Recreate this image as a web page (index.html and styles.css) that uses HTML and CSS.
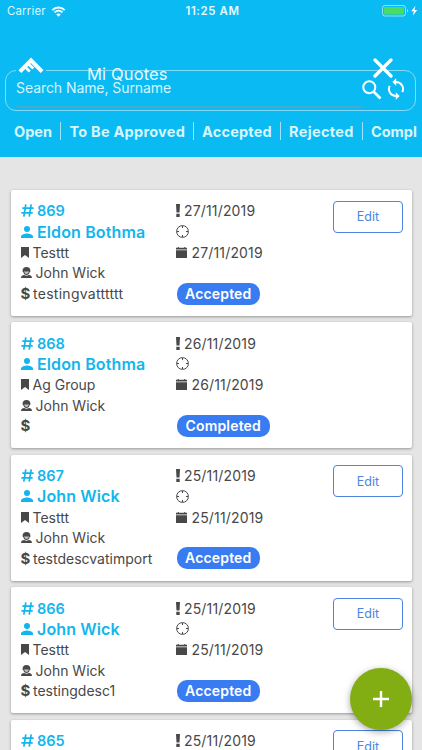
FILE: index.html
```html
<!DOCTYPE html>
<html lang="en">
<head>
<meta charset="utf-8">
<title>Mi Quotes</title>
<link rel="stylesheet" href="styles.css">
</head>
<body>
<svg class="symbols" aria-hidden="true">
  <symbol id="hash" viewBox="0 0 13 13"><path d="M4.8.4 2.8 12.6M10.2.4 8.2 12.6M1.3 4.1h11.3M.4 8.9h11.3" fill="none" stroke="currentColor" stroke-width="1.700"/></symbol>
  <symbol id="person" viewBox="0 0 12 12"><circle cx="6" cy="3.1" r="3"/><path d="M0 12v-1.6C0 8.400 4 7.400 6 7.400s6 1 6 3V12z"/></symbol>
  <symbol id="bookmark" viewBox="0 0 8 11"><path d="M0 0h8v11L4 8.100 0 11z"/></symbol>
  <symbol id="agent" viewBox="0 0 11 11"><path d="M1.500 4.400C1.500 1.500 3 0 5.500 0s4 1.500 4 4.400L8.700 5C8.400 6.900 7.200 8 5.500 8S2.600 6.900 2.300 5z"/><path d="M3.200 4.300c1.400.3 3.200.3 4.600 0C7.600 6 6.800 7 5.500 7S3.400 6 3.200 4.300z" fill="#fff" opacity=".65"/><path d="M0 11c0-2 1.300-2.700 3.300-3 1.300 1 3.100 1 4.400 0 2 .3 3.300 1 3.300 3z"/></symbol>
  <symbol id="alert" viewBox="0 0 4 13"><path d="M0 0h4l-.5 8.500h-3zM.3 9.700h3.400V13H.3z"/></symbol>
  <symbol id="clock" viewBox="0 0 13 13"><circle cx="6.500" cy="6.500" r="5.900" fill="none" stroke="currentColor" stroke-width="1"/><path d="M6.500 1v2M6.500 10v2M1 6.500h2M10 6.500h2" stroke="currentColor"/></symbol>
  <symbol id="calendar" viewBox="0 0 11 11"><path d="M0 .8h1.800V0h1v.8h5.400V0h1v.8H11V2.500H0zM0 3.200h11V11H0z"/></symbol>
</svg>

<header class="header">
  <div class="status">
    <span class="carrier">Carrier</span>
    <svg class="wifi" viewBox="0 0 14 11"><path d="M.8 4.100c3.500-3.500 8.900-3.500 12.400 0M3 6.400c2.300-2.200 5.700-2.200 8 0" fill="none" stroke="currentColor" stroke-width="1.900"/><path d="M4.700 8.300c1.400-1.200 3.200-1.200 4.600 0L7 10.700z"/></svg>
    <span class="time">11:25 AM</span>
    <svg class="battery" viewBox="0 0 36 12"><rect x=".5" y=".5" width="23" height="10.500" rx="2.500" fill="none" stroke="#fff" stroke-opacity=".55"/><rect x="2" y="2" width="20" height="7.500" rx="1.200" fill="#4cd964"/><path d="M25 4c1.500.5 1.500 3 0 3.500z" opacity=".6"/><path d="M33.500.8 29.200 6.300h2.600l-1 4.400 4.400-5.800h-2.700z"/></svg>
  </div>
  <div class="titlebar">
    <span class="logo"><svg viewBox="0 0 26 17"><path d="M1.900 14.700 13 3.300l11.100 11.400" fill="none" stroke="currentColor" stroke-width="4"/><path d="m6.500 9.500 5.300 5M10 6.500l5.300 5" fill="none" stroke="currentColor" stroke-width="2.800"/></svg></span>
    <h1>Mi Quotes</h1>
    <svg class="close" viewBox="0 0 20 20"><path d="m2 2 16 16M18 2 2 18" stroke="currentColor" stroke-width="3.200" stroke-linecap="round"/></svg>
  </div>
  <div class="search">
    <div class="field">Search Name, Surname</div>
    <svg class="find" viewBox="0 0 20 20"><circle cx="7.300" cy="7.300" r="6" fill="none" stroke="currentColor" stroke-width="2"/><path d="m11.500 11.500 7 7" stroke="currentColor" stroke-width="2.600"/></svg>
    <svg class="sync" viewBox="0 0 18 22"><path d="M9 4a7 7 0 0 1 6.300 10.100M9 18A7 7 0 0 1 2.700 7.900" fill="none" stroke="currentColor" stroke-width="2"/><path d="M9.200.3v7.400L5.300 4zM8.800 14.300v7.400l3.900-3.700z"/></svg>
  </div>
  <nav class="tabs">
    <span class="tab open">Open</span><span class="tab approve">To Be Approved</span><span class="tab accept">Accepted</span><span class="tab reject">Rejected</span><span class="tab complete">Completed</span>
  </nav>
</header>

<main class="list">
  <article class="card">
    <div class="left">
      <div class="row number"><svg class="hash"><use href="#hash"/></svg>869</div>
      <div class="row client"><svg class="person"><use href="#person"/></svg>Eldon Bothma</div>
      <div class="row"><svg class="bookmark"><use href="#bookmark"/></svg>Testtt</div>
      <div class="row"><svg class="agent"><use href="#agent"/></svg>John Wick</div>
      <div class="row"><b class="dollar">$</b><span class="vat">testingvatttttt</span></div>
    </div>
    <div class="mid">
      <div class="row"><svg class="alert"><use href="#alert"/></svg>27/11/2019</div>
      <div class="row"><svg class="clock"><use href="#clock"/></svg></div>
      <div class="row"><svg class="calendar"><use href="#calendar"/></svg>27/11/2019</div>
      <span class="badge">Accepted</span>
    </div>
    <button class="edit">Edit</button>
  </article>
  <article class="card">
    <div class="left">
      <div class="row number"><svg class="hash"><use href="#hash"/></svg>868</div>
      <div class="row client"><svg class="person"><use href="#person"/></svg>Eldon Bothma</div>
      <div class="row"><svg class="bookmark"><use href="#bookmark"/></svg>Ag Group</div>
      <div class="row"><svg class="agent"><use href="#agent"/></svg>John Wick</div>
      <div class="row"><b class="dollar">$</b></div>
    </div>
    <div class="mid">
      <div class="row"><svg class="alert"><use href="#alert"/></svg>26/11/2019</div>
      <div class="row"><svg class="clock"><use href="#clock"/></svg></div>
      <div class="row"><svg class="calendar"><use href="#calendar"/></svg>26/11/2019</div>
      <span class="badge wide">Completed</span>
    </div>
  </article>
  <article class="card">
    <div class="left">
      <div class="row number"><svg class="hash"><use href="#hash"/></svg>867</div>
      <div class="row client"><svg class="person"><use href="#person"/></svg>John Wick</div>
      <div class="row"><svg class="bookmark"><use href="#bookmark"/></svg>Testtt</div>
      <div class="row"><svg class="agent"><use href="#agent"/></svg>John Wick</div>
      <div class="row"><b class="dollar">$</b>testdescvatimport</div>
    </div>
    <div class="mid">
      <div class="row"><svg class="alert"><use href="#alert"/></svg>25/11/2019</div>
      <div class="row"><svg class="clock"><use href="#clock"/></svg></div>
      <div class="row"><svg class="calendar"><use href="#calendar"/></svg>25/11/2019</div>
      <span class="badge">Accepted</span>
    </div>
    <button class="edit">Edit</button>
  </article>
  <article class="card">
    <div class="left">
      <div class="row number"><svg class="hash"><use href="#hash"/></svg>866</div>
      <div class="row client"><svg class="person"><use href="#person"/></svg>John Wick</div>
      <div class="row"><svg class="bookmark"><use href="#bookmark"/></svg>Testtt</div>
      <div class="row"><svg class="agent"><use href="#agent"/></svg>John Wick</div>
      <div class="row"><b class="dollar">$</b>testingdesc1</div>
    </div>
    <div class="mid">
      <div class="row"><svg class="alert"><use href="#alert"/></svg>25/11/2019</div>
      <div class="row"><svg class="clock"><use href="#clock"/></svg></div>
      <div class="row"><svg class="calendar"><use href="#calendar"/></svg>25/11/2019</div>
      <span class="badge">Accepted</span>
    </div>
    <button class="edit">Edit</button>
  </article>
  <article class="card">
    <div class="left">
      <div class="row number"><svg class="hash"><use href="#hash"/></svg>865</div>
    </div>
    <div class="mid">
      <div class="row"><svg class="alert"><use href="#alert"/></svg>25/11/2019</div>
    </div>
    <button class="edit">Edit</button>
  </article>
</main>
<button class="fab" aria-label="Add quote"><svg viewBox="0 0 16 16"><path d="M8 0v16M0 8h16" stroke="currentColor" stroke-width="2.400"/></svg></button>
</body>
</html>
```
FILE: styles.css
```css
* { box-sizing: border-box; }
html, body { height: 750px; overflow: hidden; }
body {
  margin: 0;
  width: 422px;
  position: relative;
  background: #e5e5e5;
  color: #484848;
  font-family: Inter, "Liberation Sans", sans-serif;
  font-size: 14px;
}
svg { display: block; flex: none; fill: currentColor; }
.symbols { position: absolute; width: 0; height: 0; }

.header { height: 157px; background: #0abbf3; color: #fff; }
.status { display: flex; align-items: center; height: 22px; padding: 0 4px 0 7px; font-size: 11.4px; }
.carrier { width: 38px; margin-right: 6px; color: #ddf6fe; letter-spacing: .2px; white-space: nowrap; }
.wifi { width: 15px; height: 11px; }
.time { width: 60px; margin-left: 119.500px; font-weight: 600; color: #e6f9ff; letter-spacing: .62px; white-space: nowrap; }
.battery { width: 36px; height: 12px; margin-left: auto; }

.titlebar { position: relative; z-index: 1; display: flex; align-items: flex-start; height: 47px; margin-bottom: 1px; padding: 33px 28px 0 16px; }
.logo { width: 30px; height: 22px; padding: 2px 2px; background: #0abbf3; }
.logo svg { width: 26px; height: 17px; }
h1 { margin: 9px 0 0 41px; font-size: 16.5px; line-height: 20px; font-weight: 400; color: #e9faff; letter-spacing: .15px; }
.close { width: 20px; height: 20px; margin: 3px 1px 0 auto; }

.search { display: flex; align-items: flex-start; width: 411px; height: 41px; margin-left: 5px; border: 1px solid #7fdbf8; border-radius: 11px; }
.field { width: 347px; height: 37px; margin: 0 0 0 10px; padding-top: 7px; border-bottom: 2px solid #4ba9cc; border-radius: 0 0 4px 4px; line-height: 20px; letter-spacing: -.07px; color: #d6f4fe; }
.find { width: 20px; height: 20px; margin: 9px 0 0 -1px; }
.sync { width: 18px; height: 22px; margin: 7px 0 0 5px; }

.tabs { display: flex; width: 417px; height: 18px; margin-top: 11px; padding-left: 14px; overflow: hidden; font-size: 14.5px; line-height: 19px; font-weight: 700; color: #d8f6ff; white-space: nowrap; }
.tab { flex: none; border-right: 1px solid #9ee5fb; }
.open { width: 47px; }
.approve { width: 133px; padding-left: 8.500px; letter-spacing: .25px; }
.accept { width: 87px; padding-left: 8px; letter-spacing: .2px; }
.reject { width: 82px; padding-left: 8px; letter-spacing: .35px; }
.complete { padding-left: 8px; }

.list { display: flex; flex-direction: column; gap: 6.400px; padding: 33px 10.500px 0; }
.card { position: relative; display: flex; flex: none; height: 126px; padding: 10.500px 8.500px 0 10px; border-radius: 2px; background: #fff; box-shadow: 0 1px 3px rgba(0,0,0,.35); }
.left { width: 155.500px; }
.mid { width: 157px; letter-spacing: .16px; }
.row { display: flex; align-items: center; height: 20.700px; white-space: nowrap; }
.number { color: #12b6ec; font-size: 14.500px; font-weight: 600; }
.client { color: #12b6ec; font-size: 16px; font-weight: 600; letter-spacing: .12px; }
.hash { width: 13px; height: 13px; margin-right: 3.500px; }
.person { width: 12px; height: 12px; margin-right: 4.500px; }
.bookmark { width: 8px; height: 11px; margin-right: 4px; }
.agent { width: 11px; height: 11px; margin-right: 4px; }
.dollar { width: 12.500px; font-size: 15px; font-weight: 700; }
.vat { letter-spacing: .28px; }
.alert { width: 4px; height: 13px; margin-right: 4px; }
.clock { width: 13px; height: 13px; }
.calendar { width: 11px; height: 11px; margin-right: 4.500px; }
.badge { display: block; width: 83.500px; height: 22px; margin: 20px 0 0 .5px; border-radius: 10px; background: #397cf2; color: #fff; font-size: 14px; line-height: 22px; font-weight: 600; text-align: center; }
.wide { width: 93.500px; }
.edit { width: 70px; height: 32px; margin-left: auto; border: 1px solid #4c84df; border-radius: 4px; background: #fff; color: #4c84df; padding: 0; font: 12.500px Inter, sans-serif; }
.fab { position: absolute; left: 350px; top: 668px; display: grid; place-items: center; width: 62px; height: 62px; border: 0; border-radius: 50%; background: #82ae14; color: #fff; box-shadow: 0 2px 7px rgba(0,0,0,.35); }
.fab svg { width: 16px; height: 16px; }
```
